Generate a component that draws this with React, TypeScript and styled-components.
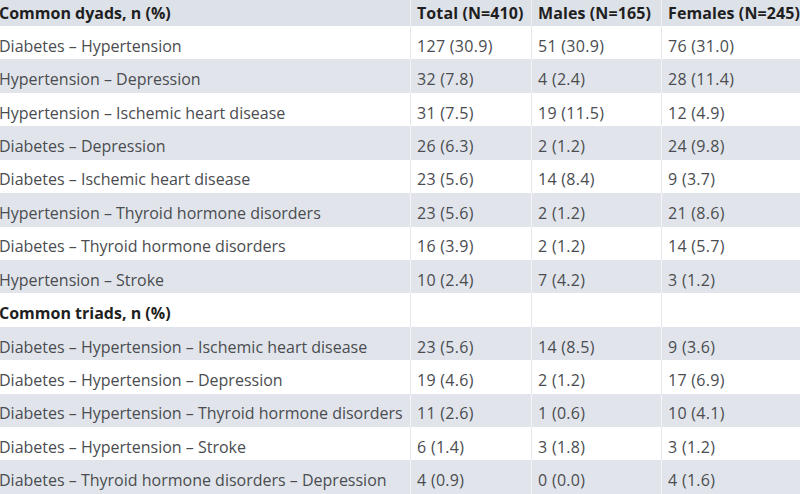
import styled, { createGlobalStyle } from "styled-components";

const GlobalStyle = createGlobalStyle`
  html, body {
    margin: 0;
    padding: 0;
    background: #ffffff;
    overflow: hidden;
  }
  body {
    font-family: "Open Sans", "Liberation Sans", sans-serif;
  }
`;

type Row = { label: string; total?: string; males?: string; females?: string; section?: boolean };

const rows: Row[] = [
  { label: "Diabetes – Hypertension", total: "127 (30.9)", males: "51 (30.9)", females: "76 (31.0)" },
  { label: "Hypertension – Depression", total: "32 (7.8)", males: "4 (2.4)", females: "28 (11.4)" },
  { label: "Hypertension – Ischemic heart disease", total: "31 (7.5)", males: "19 (11.5)", females: "12 (4.9)" },
  { label: "Diabetes – Depression", total: "26 (6.3)", males: "2 (1.2)", females: "24 (9.8)" },
  { label: "Diabetes – Ischemic heart disease", total: "23 (5.6)", males: "14 (8.4)", females: "9 (3.7)" },
  { label: "Hypertension – Thyroid hormone disorders", total: "23 (5.6)", males: "2 (1.2)", females: "21 (8.6)" },
  { label: "Diabetes – Thyroid hormone disorders", total: "16 (3.9)", males: "2 (1.2)", females: "14 (5.7)" },
  { label: "Hypertension – Stroke", total: "10 (2.4)", males: "7 (4.2)", females: "3 (1.2)" },
  { label: "Common triads, n (%)", section: true },
  { label: "Diabetes – Hypertension – Ischemic heart disease", total: "23 (5.6)", males: "14 (8.5)", females: "9 (3.6)" },
  { label: "Diabetes – Hypertension – Depression", total: "19 (4.6)", males: "2 (1.2)", females: "17 (6.9)" },
  { label: "Diabetes – Hypertension – Thyroid hormone disorders", total: "11 (2.6)", males: "1 (0.6)", females: "10 (4.1)" },
  { label: "Diabetes – Hypertension – Stroke", total: "6 (1.4)", males: "3 (1.8)", females: "3 (1.2)" },
  { label: "Diabetes – Thyroid hormone disorders – Depression", total: "4 (0.9)", males: "0 (0.0)", females: "4 (1.6)" },
];

const App = () => {
  return (
    <>
      <GlobalStyle />
      <Table>
        <HeaderRow>
          <LabelCell $bold>Common dyads, n (%)</LabelCell>
          <Cell $bold>Total (N=410)</Cell>
          <Cell $bold>Males (N=165)</Cell>
          <Cell $bold>Females (N=245)</Cell>
        </HeaderRow>
        {rows.map((r, i) => (
          <BodyRow key={i} $shaded={i % 2 === 1}>
            <LabelCell $bold={r.section}>{r.label}</LabelCell>
            <Cell>{r.total}</Cell>
            <Cell>{r.males}</Cell>
            <Cell>{r.females}</Cell>
          </BodyRow>
        ))}
      </Table>
    </>
  );
};

export default App;

const Table = styled.div`
  width: 800px;
  height: 494px;
  overflow: hidden;
  display: flex;
  flex-direction: column;
`;

const HeaderRow = styled.div`
  display: grid;
  grid-template-columns: 410px 121px 130px 1fr;
  height: 26px;
  flex: none;
  background-color: #dde2e9;
  --pad: 0px;
`;

const BodyRow = styled.div<{ $shaded?: boolean }>`
  display: grid;
  grid-template-columns: 410px 121px 130px 1fr;
  height: 33.43px;
  flex: none;
  background-color: ${(p) => (p.$shaded ? "#e1e5eb" : "#ffffff")};
  --sep: ${(p) => (p.$shaded ? "#f3f5f8" : "#e4e7ec")};
  --pad: 6px;
`;

const Cell = styled.div<{ $bold?: boolean }>`
  display: flex;
  align-items: center;
  padding-left: 6px;
  padding-top: var(--pad);
  white-space: nowrap;
  overflow: hidden;
  font-size: 16px;
  letter-spacing: ${(p) => (p.$bold ? "0.1px" : "0.3px")};
  font-weight: ${(p) => (p.$bold ? 700 : 400)};
  color: ${(p) => (p.$bold ? "#1f1f22" : "#4a4c50")};
  border-left: 1px solid var(--sep, #eef0f3);
`;

const LabelCell = styled(Cell)`
  padding-left: 0;
  margin-left: -1px;
  border-left: none;
  letter-spacing: 0;
`;
